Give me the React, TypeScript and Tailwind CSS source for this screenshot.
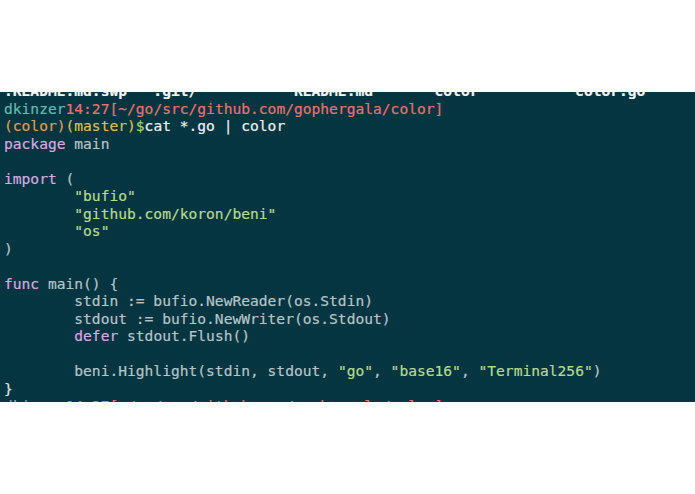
import React from "react";

const K = "text-[#d6a9e0]"; // keyword
const T = "text-[#b6c4c8]"; // plain
const S = "text-[#b6da8c]"; // string

function L({ children }: { children?: React.ReactNode }) {
  return <div className="h-[17.5px] whitespace-pre">{children ?? " "}</div>;
}

export default function App() {
  return (
    <div className="w-[695px] h-[494px] bg-white flex flex-col">
      <div className="h-[92px] shrink-0" />
      <div
        className="h-[310px] shrink-0 overflow-hidden bg-[#043540] pl-[4px] text-[14.6px] leading-[17.5px] [-webkit-text-stroke:0.2px]"
        style={{ fontFamily: '"DejaVu Sans Mono", "Liberation Mono", monospace' }}
      >
        <div className="mt-[-10px]">
          <L>
            <span className="text-[#f2f4f4] font-bold">{".README.md.swp   .git/           README.md       color           color.go"}</span>
          </L>
          <L>
            <span className="text-[#62bab0]">dkinzer</span>
            <span className="text-[#ea726b]">14:27[~/go/src/github.com/gophergala/color]</span>
          </L>
          <L>
            <span className="text-[#df9e50]">(color)</span>
            <span className="text-[#d9bd50]">(master)</span>
            <span className="text-[#a6d56e]">$</span>
            <span className="text-[#eef1f1]">cat *.go | color</span>
          </L>
          <L>
            <span className={K}>package</span>
            <span className={T}> main</span>
          </L>
          <L />
          <L>
            <span className={K}>import</span>
            <span className={T}> (</span>
          </L>
          <L>
            <span className={S}>{'        "bufio"'}</span>
          </L>
          <L>
            <span className={S}>{'        "github.com/koron/beni"'}</span>
          </L>
          <L>
            <span className={S}>{'        "os"'}</span>
          </L>
          <L>
            <span className={T}>)</span>
          </L>
          <L />
          <L>
            <span className={K}>func</span>
            <span className={T}> main() {"{"}</span>
          </L>
          <L>
            <span className={T}>{"        stdin := bufio.NewReader(os.Stdin)"}</span>
          </L>
          <L>
            <span className={T}>{"        stdout := bufio.NewWriter(os.Stdout)"}</span>
          </L>
          <L>
            <span className={K}>{"        defer"}</span>
            <span className={T}>{" stdout.Flush()"}</span>
          </L>
          <L />
          <L>
            <span className={T}>{"        beni.Highlight(stdin, stdout, "}</span>
            <span className={S}>"go"</span>
            <span className={T}>, </span>
            <span className={S}>"base16"</span>
            <span className={T}>, </span>
            <span className={S}>"Terminal256"</span>
            <span className={T}>)</span>
          </L>
          <L>
            <span className="text-[#dfe6e8]">{"}"}</span>
          </L>
          <L>
            <span className="text-[#62bab0]">dkinzer</span>
            <span className="text-[#ea726b]">14:27[~/go/src/github.com/gophergala/color]</span>
          </L>
        </div>
      </div>
      <div className="flex-1" />
    </div>
  );
}
